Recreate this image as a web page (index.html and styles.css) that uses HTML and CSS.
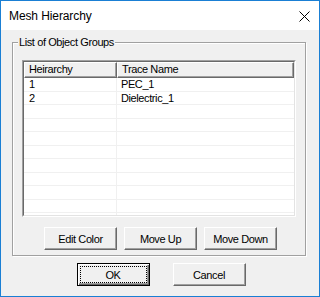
FILE: index.html
```html
<!DOCTYPE html>
<html lang="en">

<head>
    <meta charset="UTF-8">
    <meta name="viewport" content="width=device-width, initial-scale=1.0">
    <title>Mesh Hierarchy</title>
    <link rel="stylesheet" href="styles.css">
</head>

<body>
    <div class="dialog">
        <div class="titlebar">
            <span class="title">Mesh Hierarchy</span>
            <svg class="close-icon" viewBox="0 0 11 11" width="11" height="11">
                <path d="M0.5 0.5 L10.5 10.5 M10.5 0.5 L0.5 10.5" stroke="#000" stroke-width="1" fill="none"/>
            </svg>
        </div>
        <div class="content">
            <fieldset class="group">
                <legend>List of Object Groups</legend>
                <div class="listview">
                    <div class="listview-inner">
                        <div class="lv-header">
                            <div class="lv-head col-a">Heirarchy</div>
                            <div class="lv-head col-b">Trace Name</div>
                        </div>
                        <div class="lv-rows">
                            <div class="lv-cell col-a">1</div><div class="lv-cell col-b">PEC_1</div>
                            <div class="lv-cell col-a">2</div><div class="lv-cell col-b">Dielectric_1</div>
                            <div class="lv-cell col-a"></div><div class="lv-cell col-b"></div>
                            <div class="lv-cell col-a"></div><div class="lv-cell col-b"></div>
                            <div class="lv-cell col-a"></div><div class="lv-cell col-b"></div>
                            <div class="lv-cell col-a"></div><div class="lv-cell col-b"></div>
                            <div class="lv-cell col-a"></div><div class="lv-cell col-b"></div>
                            <div class="lv-cell col-a"></div><div class="lv-cell col-b"></div>
                            <div class="lv-cell col-a"></div><div class="lv-cell col-b"></div>
                            <div class="lv-cell col-a"></div><div class="lv-cell col-b"></div>
                            <div class="lv-cell col-a"></div><div class="lv-cell col-b"></div>
                        </div>
                    </div>
                </div>
                <div class="button-row group-buttons">
                    <button class="btn">Edit Color</button>
                    <button class="btn">Move Up</button>
                    <button class="btn">Move Down</button>
                </div>
            </fieldset>
            <div class="button-row dialog-buttons">
                <button class="btn btn-default"><span class="focus">OK</span></button>
                <button class="btn">Cancel</button>
            </div>
        </div>
    </div>
</body>

</html>
```

FILE: styles.css
```css
* {
    box-sizing: border-box;
}

body {
    margin: 0;
}

.dialog {
    width: 320px;
    height: 297px;
    border: 1px solid #1a7fd4;
    background: #f0f0f0;
    font-family: "Liberation Sans", Arial, sans-serif;
    font-size: 11px;
    color: #000;
    letter-spacing: -0.4px;
}

.titlebar {
    height: 29px;
    background: #fff;
    display: flex;
    align-items: center;
    justify-content: space-between;
    padding: 0 9px 0 8px;
}

.title {
    font-size: 12px;
    letter-spacing: -0.1px;
}

.close-icon {
    display: block;
    margin-top: 1px;
}

.group {
    margin: 6px 0 0 11px;
    width: 294px;
    padding: 11px 0 5px 0;
    border: 1px solid #a0a0a0;
    box-shadow: inset 1px 1px #fff, 1px 1px #fff;
    min-inline-size: 0;
}

.group legend {
    margin-left: 5px;
    padding: 0 1px;
    line-height: 13px;
    background: #f0f0f0;
}

.listview {
    width: 274px;
    height: 157px;
    margin-left: 9px;
    border: 1px solid;
    border-color: #a0a0a0 #fff #fff #a0a0a0;
}

.listview-inner {
    height: 100%;
    border: 1px solid;
    border-color: #696969 #e3e3e3 #e3e3e3 #696969;
    background: #fff;
    overflow: hidden;
}

.lv-header {
    display: grid;
    grid-template-columns: 93px 1fr;
    height: 16px;
}

.lv-head {
    background: #f0f0f0;
    border: 1px solid;
    border-color: #fff #696969 #696969 #fff;
    box-shadow: inset -1px -1px #a0a0a0;
    padding-left: 4px;
    line-height: 13px;
}

.lv-rows {
    display: grid;
    grid-template-columns: 93px 1fr;
    grid-auto-rows: 13.5px;
}

.lv-cell {
    border-bottom: 1px solid #f0f0f0;
    line-height: 12px;
    padding-left: 5px;
}

.lv-cell.col-a {
    border-right: 1px solid #f0f0f0;
}

.lv-cell.col-b {
    padding-left: 4px;
}

.button-row {
    display: flex;
    justify-content: center;
}

.group-buttons {
    gap: 7px;
    margin-top: 10px;
    padding-left: 3px;
}

.dialog-buttons {
    gap: 23px;
    margin-top: 7px;
    padding-left: 2px;
}

.btn {
    width: 73px;
    height: 23px;
    padding: 0;
    font: inherit;
    letter-spacing: inherit;
    color: #000;
    background: #f0f0f0;
    border: 1px solid;
    border-color: #fff #696969 #696969 #fff;
    box-shadow: inset -1px -1px #a0a0a0;
}

.btn-default {
    border-color: #000;
    box-shadow: inset 1px 1px #fff, inset -1px -1px #696969, inset -2px -2px #a0a0a0;
    padding: 2px;
}

.btn-default .focus {
    display: flex;
    align-items: center;
    justify-content: center;
    height: 100%;
    border: 1px dotted #000;
}
```
